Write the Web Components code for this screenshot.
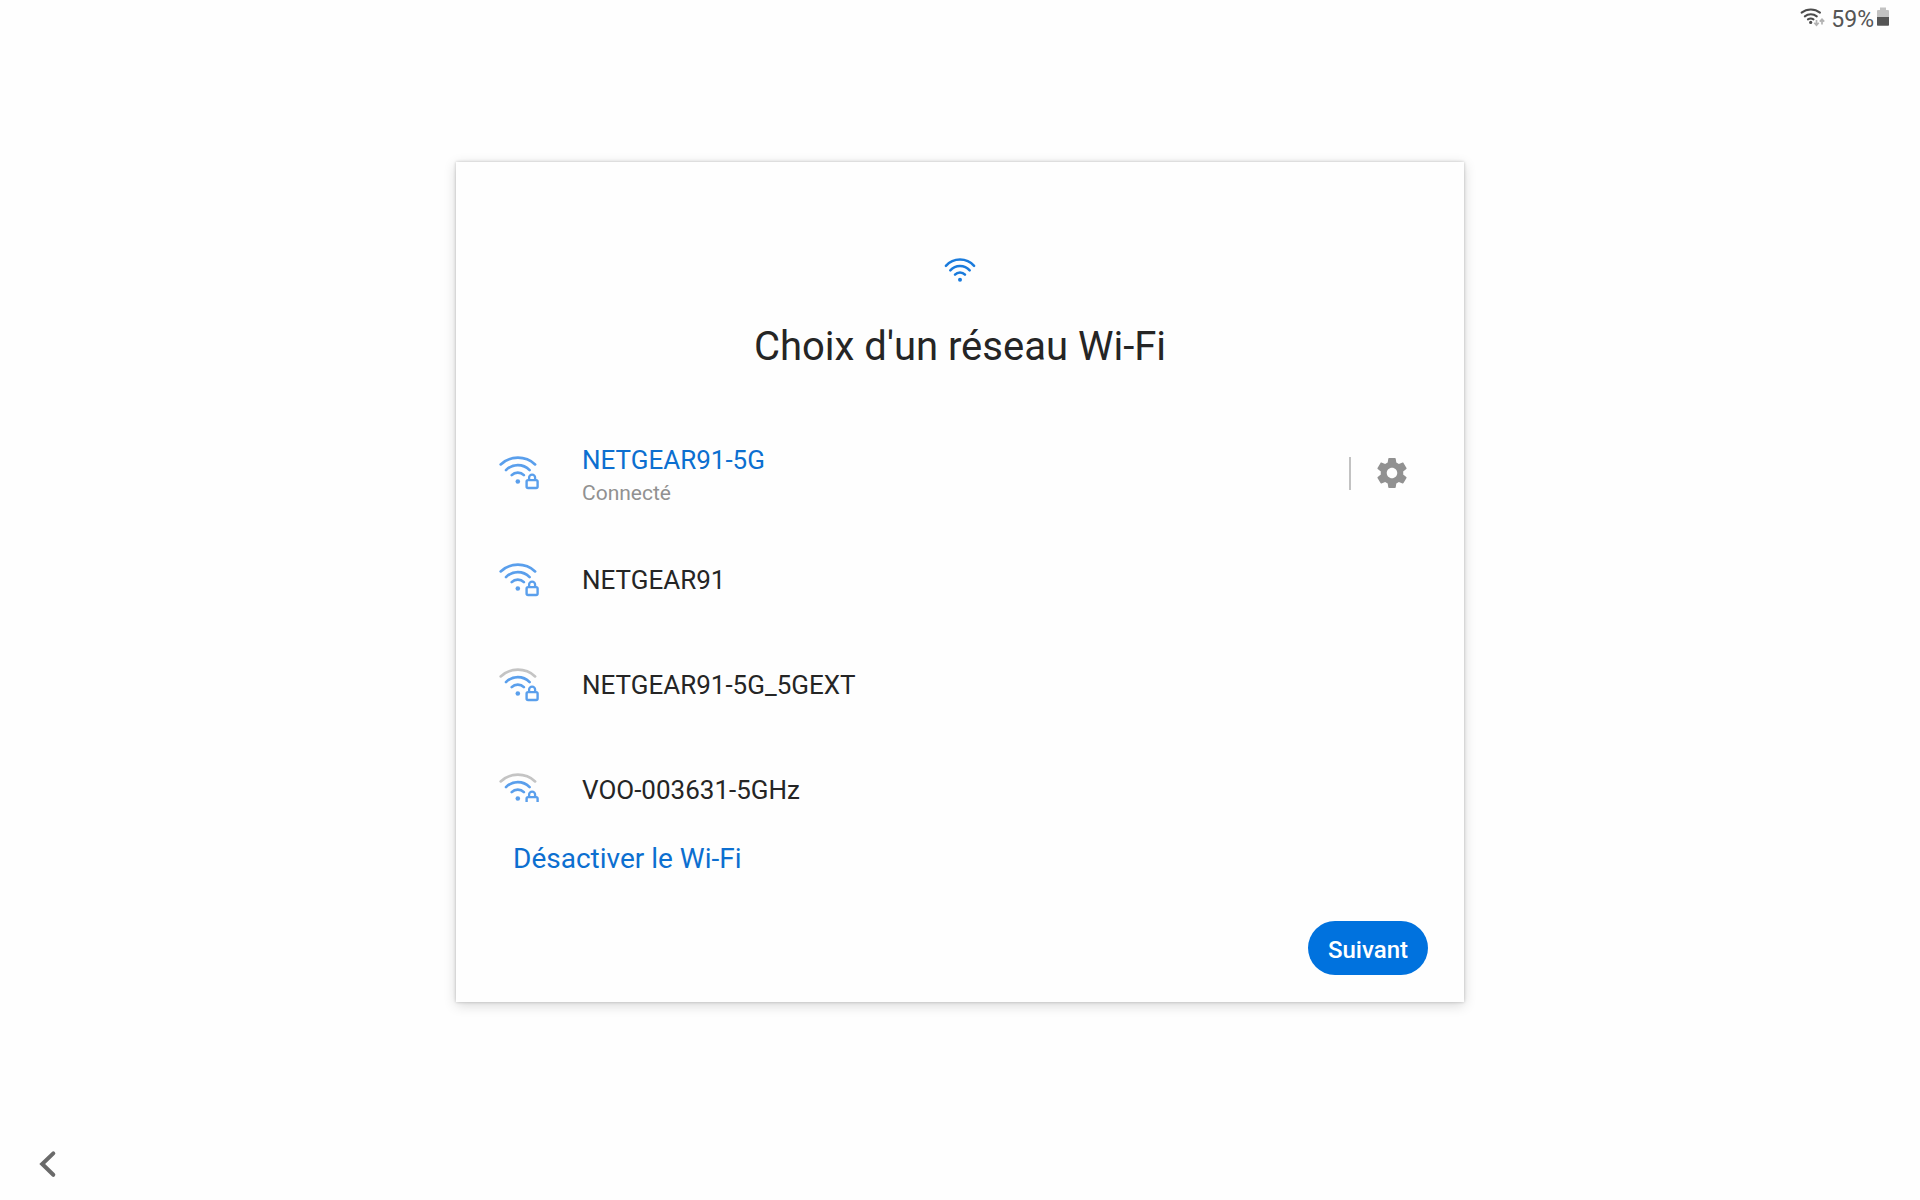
<!DOCTYPE html>
<html lang="fr">
<head>
<meta charset="utf-8">
<meta name="viewport" content="width=device-width, initial-scale=1">
<title>Choix d'un réseau Wi-Fi</title>
<style>
body {
   margin: 0;
   background: #fefefe;
   color: #252525;
   font-family: Roboto, sans-serif;
}
</style>
</head>
<body>

<setup-screen>
   <status-bar slot="status" battery="59"></status-bar>

   <setup-card heading="Choix d'un réseau Wi-Fi">
      <wifi-network name="NETGEAR91-5G" status="Connecté" level="3"></wifi-network>
      <wifi-network name="NETGEAR91" level="3"></wifi-network>
      <wifi-network name="NETGEAR91-5G_5GEXT" level="2"></wifi-network>
      <wifi-network name="VOO-003631-5GHz" level="2"></wifi-network>
      <text-button slot="toggle">Désactiver le Wi-Fi</text-button>
      <pill-button slot="next">Suivant</pill-button>
   </setup-card>

   <back-button slot="nav"></back-button>
</setup-screen>

<script>
// Small helper: attach an open root and fill it from a template
const render = (el, html) => {
   const template = document.createElement('template')
   template.innerHTML = html
   el.attachShadow({ mode: 'open' }).appendChild(template.content.cloneNode(true))
}

class SetupScreen extends HTMLElement {
   constructor() {
      super()
      render(this, `
<style>
:host {
   display: grid;
   grid-template-rows: 13.5vh 70vh 1fr;
   justify-items: center;
   min-height: 100vh;
}
header {
   justify-self: stretch;
}
main {
   width: 52.5vw;
   min-width: 480px;
   display: grid;
}
nav {
   justify-self: start;
   align-self: end;
   padding: 0 0 12px 24px;
}
</style>
<header><slot name="status"></slot></header>
<main><slot></slot></main>
<nav><slot name="nav"></slot></nav>
`)
   }
}

class StatusBar extends HTMLElement {
   constructor() {
      super()
      render(this, `
<style>
:host {
   display: flex;
   justify-content: flex-end;
   align-items: flex-start;
   padding: 7px 31px 0 0;
   color: #555;
   font-size: 23px;
   line-height: 26px;
}
svg {
   display: block;
   flex: none;
}
.level {
   margin: 0 3px 0 6px;
}
</style>
<svg width="25" height="20" viewBox="0 0 25 20" fill="none" stroke="#4c4c4c" stroke-width="2" stroke-linecap="round" aria-hidden="true">
   <path d="M1.6 5.6a14.8 14.8 0 0 1 18.4 0"/>
   <path d="M4.8 9.4a9.6 9.6 0 0 1 12 0"/>
   <path d="M7.9 12.4a5 5 0 0 1 5.6 0"/>
   <circle cx="10.7" cy="15.4" r="1.6" fill="#4c4c4c" stroke="none"/>
   <g stroke="#b2b2b2" stroke-width="1.7" stroke-linecap="butt">
      <path d="M16.5 13v5M14.3 15.8l2.2 2.4 2.2-2.4"/>
      <path d="M22 17.5v-5M19.8 14.6l2.2-2.4 2.2 2.4"/>
   </g>
</svg>
<span class="level"></span>
<svg width="12" height="19" viewBox="0 0 12 19" aria-hidden="true">
   <path d="M3 .5h6V3h2q1 0 1 1v6H0V4q0-1 1-1h2z" fill="#c2c2c2"/>
   <path d="M0 10h12v8q0 .7-.8.7H.8q-.8 0-.8-.7z" fill="#555"/>
</svg>
`)
   }

   connectedCallback() {
      this.shadowRoot.querySelector('.level').textContent = `${this.getAttribute('battery')}%`
   }
}

class SetupCard extends HTMLElement {
   constructor() {
      super()
      render(this, `
<style>
:host {
   display: flex;
   flex-direction: column;
   box-sizing: border-box;
   min-height: 0;
   padding: 94px 0 27px;
   background: #fefefe;
   box-shadow: 0 0 3px rgb(0 0 0 / 0.22), 0 3px 12px rgb(0 0 0 / 0.16);
}
.hero {
   display: block;
   flex: none;
   margin: 0 auto 39px;
}
h1 {
   margin: 0 0 48px;
   font-size: 40px;
   line-height: 48px;
   font-weight: 400;
   text-align: center;
}
.list {
   flex: 1;
   min-height: 0;
   overflow: hidden;
}
.toggle {
   padding: 37px 57px 42px;
}
.next {
   display: flex;
   justify-content: flex-end;
   padding: 0 36px;
}
</style>
<svg class="hero" width="32" height="28" viewBox="0 0 32 28" fill="none" stroke="#1a7bdc" stroke-width="2.5" stroke-linecap="round" aria-hidden="true">
   <path d="M1.9 9.8a19 19 0 0 1 28.2 0"/>
   <path d="M6.3 14.3a13 13 0 0 1 19.4 0"/>
   <path d="M11 18.6a6.8 6.8 0 0 1 10 0"/>
   <circle cx="16" cy="23.7" r="2" fill="#1a7bdc" stroke="none"/>
</svg>
<h1></h1>
<div class="list" role="list"><slot></slot></div>
<div class="toggle"><slot name="toggle"></slot></div>
<div class="next"><slot name="next"></slot></div>
`)
   }

   connectedCallback() {
      this.shadowRoot.querySelector('h1').textContent = this.getAttribute('heading')
   }
}

class WifiSignal extends HTMLElement {
   constructor() {
      super()
      render(this, `
<style>
:host {
   display: block;
   flex: none;
   --on: #5a9fec;
   --off: #c4c4c4;
}
svg {
   display: block;
}
path, rect {
   stroke: var(--on);
}
circle {
   fill: var(--on);
   stroke: none;
}
:host([level="2"]) .outer {
   stroke: var(--off);
}
</style>
<svg width="40" height="36" viewBox="0 0 40 36" fill="none" stroke-width="2.7" stroke-linecap="round" aria-hidden="true">
   <path class="outer" d="M1.7 9.4a25.4 25.4 0 0 1 34.4 0"/>
   <path d="M7 15.1a16.5 16.5 0 0 1 23.6 0"/>
   <path d="M12.7 20.1a8.6 8.6 0 0 1 12.2 0"/>
   <circle cx="18.8" cy="26.5" r="2.3"/>
   <rect x="27.6" y="25.1" width="11" height="7.9" rx="1.5" stroke-width="2.4"/>
   <path d="M30.1 24.8v-2.2a3 3 0 0 1 6 0v2.2" stroke-width="2.3"/>
</svg>
`)
   }
}

class WifiNetwork extends HTMLElement {
   constructor() {
      super()
      render(this, `
<style>
:host {
   display: flex;
   align-items: center;
   box-sizing: border-box;
   min-height: 105px;
   padding: 20px 54px 20px 43px;
}
button {
   margin: 0;
   padding: 0;
   border: 0;
   background: none;
   color: inherit;
   font: inherit;
   text-align: left;
   cursor: pointer;
}
.join {
   flex: 1;
   display: flex;
   align-items: center;
   gap: 43px;
}
.name, .status {
   display: block;
}
.name {
   font-size: 26px;
   line-height: 34px;
}
.status {
   color: #919191;
   font-size: 21px;
   line-height: 32px;
}
.settings {
   display: flex;
   align-items: center;
   padding-left: 23px;
}
.settings::before {
   content: '';
   width: 2px;
   height: 33px;
   margin: 0 23px 0 -23px;
   background: #c2c2c2;
}
.settings svg {
   display: block;
}
:host(:not([status])) .settings,
:host(:not([status])) .status {
   display: none;
}
:host([status]) .text {
   padding-top: 4px;
   margin-bottom: -2px;
}
:host([status]) .name {
   color: #0c6fd0;
}
</style>
<button class="join" type="button">
   <wifi-signal></wifi-signal>
   <span class="text">
      <span class="name"></span>
      <span class="status"></span>
   </span>
</button>
<button class="settings" type="button" aria-label="Paramètres du réseau">
   <svg width="36" height="36" viewBox="0 0 24 24" fill="#919191" aria-hidden="true">
      <path d="M19.43 12.98c.04-.32.07-.64.07-.98s-.03-.66-.07-.98l2.11-1.65c.19-.15.24-.42.12-.64l-2-3.46c-.12-.22-.39-.3-.61-.22l-2.49 1c-.52-.4-1.08-.73-1.69-.98l-.38-2.65C14.46 2.18 14.25 2 14 2h-4c-.25 0-.46.18-.49.42l-.38 2.65c-.61.25-1.17.59-1.69.98l-2.49-1c-.23-.09-.49 0-.61.22l-2 3.46c-.13.22-.07.49.12.64l2.11 1.65c-.04.32-.07.65-.07.98s.03.66.07.98l-2.11 1.65c-.19.15-.24.42-.12.64l2 3.46c.12.22.39.3.61.22l2.49-1c.52.4 1.08.73 1.69.98l.38 2.65c.03.24.24.42.49.42h4c.25 0 .46-.18.49-.42l.38-2.65c.61-.25 1.17-.59 1.69-.98l2.49 1c.23.09.49 0 .61-.22l2-3.46c.12-.22.07-.49-.12-.64l-2.11-1.65zM12 15.5c-1.93 0-3.5-1.57-3.5-3.5s1.57-3.5 3.5-3.5 3.5 1.57 3.5 3.5-1.57 3.5-3.5 3.5z"/>
   </svg>
</button>
`)
   }

   connectedCallback() {
      this.setAttribute('role', 'listitem')
      this.shadowRoot.querySelector('.name').textContent = this.getAttribute('name')
      this.shadowRoot.querySelector('.status').textContent = this.getAttribute('status') ?? ''
      this.shadowRoot.querySelector('wifi-signal').setAttribute('level', this.getAttribute('level'))
   }
}

class TextButton extends HTMLElement {
   constructor() {
      super()
      render(this, `
<style>
:host {
   display: block;
}
button {
   display: block;
   margin: 0;
   padding: 0;
   border: 0;
   background: none;
   color: #0c6fd0;
   font: inherit;
   font-size: 28px;
   line-height: 40px;
   cursor: pointer;
}
</style>
<button type="button"><slot></slot></button>
`)
   }
}

class PillButton extends HTMLElement {
   constructor() {
      super()
      render(this, `
<style>
:host {
   display: block;
}
button {
   display: block;
   min-width: 120px;
   height: 54px;
   margin: 0;
   padding: 4px 20px 0;
   border: 0;
   border-radius: 27px;
   background: #0072de;
   color: #fff;
   font: inherit;
   font-size: 24px;
   font-weight: 500;
   cursor: pointer;
}
</style>
<button type="button"><slot></slot></button>
`)
   }
}

class BackButton extends HTMLElement {
   constructor() {
      super()
      render(this, `
<style>
:host {
   display: block;
}
button {
   display: grid;
   place-content: center;
   width: 48px;
   height: 48px;
   margin: 0;
   padding: 0;
   border: 0;
   background: none;
   cursor: pointer;
}
</style>
<button type="button" aria-label="Retour">
   <svg width="48" height="48" viewBox="0 0 48 48" fill="none" stroke="#6a6a6a" stroke-width="4" stroke-linecap="round" aria-hidden="true">
      <path d="M29.3 13.4 18.2 24l11.1 10.8"/>
   </svg>
</button>
`)
   }
}

window.customElements.define('setup-screen', SetupScreen)
window.customElements.define('status-bar', StatusBar)
window.customElements.define('setup-card', SetupCard)
window.customElements.define('wifi-signal', WifiSignal)
window.customElements.define('wifi-network', WifiNetwork)
window.customElements.define('text-button', TextButton)
window.customElements.define('pill-button', PillButton)
window.customElements.define('back-button', BackButton)
</script>
</body>
</html>
